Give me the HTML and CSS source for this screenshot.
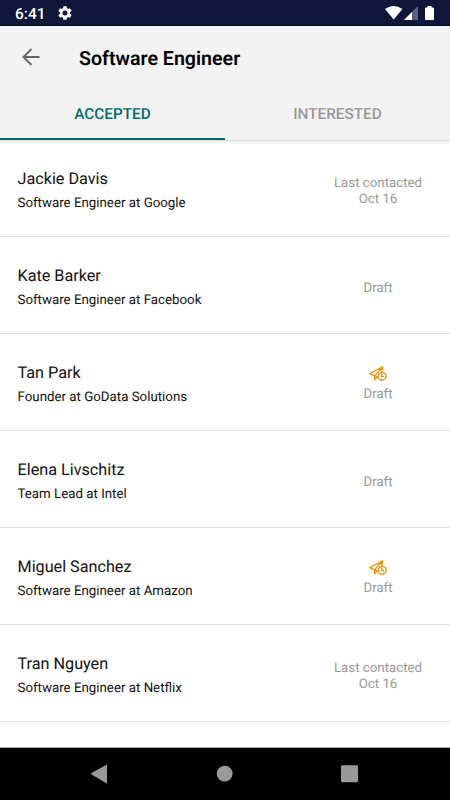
FILE: index.html
```html
<!DOCTYPE html>
<html lang="en">
<head>
    <meta charset="UTF-8">
    <meta name="viewport" content="width=device-width, initial-scale=1.0">
    <title>Software Engineer</title>
    <link rel="stylesheet" href="styles.css">
</head>
<body>
    <div class="status-bar">
        <span class="clock">6:41</span>
        <svg class="gear" viewBox="2 2 20 20" width="14" height="14"><path fill="#fff" d="M19.14 12.94c.04-.3.06-.61.06-.94s-.02-.64-.07-.94l2.03-1.58c.18-.14.23-.41.12-.61l-1.92-3.32c-.12-.22-.37-.29-.59-.22l-2.39.96c-.5-.38-1.03-.7-1.62-.94l-.36-2.54c-.04-.24-.24-.41-.48-.41h-3.84c-.24 0-.43.17-.47.41l-.36 2.54c-.59.24-1.13.57-1.62.94l-2.39-.96c-.22-.08-.47 0-.59.22L2.74 8.87c-.12.21-.08.47.12.61l2.03 1.58c-.05.3-.09.63-.09.94s.02.64.07.94l-2.03 1.58c-.18.14-.23.41-.12.61l1.92 3.32c.12.22.37.29.59.22l2.39-.96c.5.38 1.03.7 1.62.94l.36 2.54c.05.24.24.41.48.41h3.84c.24 0 .44-.17.47-.41l.36-2.54c.59-.24 1.13-.56 1.62-.94l2.39.96c.22.08.47 0 .59-.22l1.92-3.32c.12-.22.07-.47-.12-.61zM12 15.6a3.6 3.6 0 1 1 0-7.2 3.6 3.6 0 0 1 0 7.2z"/></svg>
        <div class="status-icons">
            <svg width="18" height="14" viewBox="0 0 18 14"><path fill="#fff" d="M0 3Q8.700-3 17.400 3L8.700 13.500z"/></svg>
            <svg width="14" height="14" viewBox="0 0 14 14"><path fill="#5d6080" d="M14 0v14H0z"/><path fill="#fff" d="M8 6v8H0z"/></svg>
            <svg class="battery" width="9" height="14" viewBox="0 0 9 15" preserveAspectRatio="none"><path fill="#fff" d="M2.500 0h4v1.500H8q1 0 1 1V14q0 1-1 1H1q-1 0-1-1V2.500q0-1 1-1h1.500z"/></svg>
        </div>
    </div>

    <header class="header">
        <div class="toolbar">
            <svg class="back" width="18" height="18" viewBox="0 0 18 18"><path fill="none" stroke="#666" stroke-width="1.900" d="M17.500 9H1.500M9.500 1L1.500 9l8 8"/></svg>
            <h1>Software Engineer</h1>
        </div>
        <nav class="tabs">
            <div class="tab active">ACCEPTED</div>
            <div class="tab">INTERESTED</div>
        </nav>
    </header>

    <main class="list" id="list">
        <!-- Candidate rows are added here -->
    </main>

    <footer class="nav-bar">
        <svg width="450" height="52" viewBox="0 0 450 52" fill="#999">
            <path d="M91.500 25L106 17q1-.5 1 .5v17q0 1-1 .5L91.500 26.500q-.8-.7 0-1.500z"/>
            <circle cx="224.700" cy="25.600" r="7.900"/>
            <rect x="341" y="17.200" width="17" height="17" rx="1.300"/>
        </svg>
    </footer>

    <script>
        const candidates = [
            { name: 'Jackie Davis', job: 'Software Engineer at Google', status: 'Last contacted<br>Oct 16' },
            { name: 'Kate Barker', job: 'Software Engineer at Facebook', status: 'Draft' },
            { name: 'Tan Park', job: 'Founder at GoData Solutions', status: 'Draft', scheduled: true },
            { name: 'Elena Livschitz', job: 'Team Lead at Intel', status: 'Draft' },
            { name: 'Miguel Sanchez', job: 'Software Engineer at Amazon', status: 'Draft', scheduled: true },
            { name: 'Tran Nguyen', job: 'Software Engineer at Netflix', status: 'Last contacted<br>Oct 16' }
        ];

        // Paper plane with a small clock, for scheduled drafts
        const planeIcon = `
            <svg class="plane" width="18" height="15" viewBox="0 0 18 15" fill="none" stroke="#e8930c" stroke-width="1.400" stroke-linejoin="round" stroke-linecap="round">
                <path d="M8.500 11.200L5.600 9.900V13.800L8 11.200M5.600 9.900L.8 7.500 13.800.8 12.800 5.500M5.600 9.900L13.800.8"/>
                <circle cx="13.200" cy="10.300" r="3.900"/>
                <path d="M12.800 8v2.600h2"/>
            </svg>`;

        document.getElementById('list').innerHTML = candidates.map(c => `
            <div class="row">
                <div class="person">
                    <h2>${c.name}</h2>
                    <p>${c.job}</p>
                </div>
                <div class="status${c.scheduled ? ' scheduled' : ''}">
                    ${c.scheduled ? planeIcon : ''}
                    <span>${c.status}</span>
                </div>
            </div>
        `).join('');
    </script>
</body>
</html>
```
FILE: styles.css
```css
* {
    margin: 0;
    padding: 0;
    box-sizing: border-box;
}

body {
    width: 450px;
    height: 800px;
    display: flex;
    flex-direction: column;
    overflow: hidden;
    background-color: #fff;
    color: #111;
    font-family: Roboto, sans-serif;
    text-rendering: geometricPrecision;
}

svg {
    display: block;
    flex: none;
}

.status-bar {
    height: 26px;
    flex: none;
    display: flex;
    align-items: center;
    padding: 1px 16px 0 15px;
    background-color: #10163a;
    border-bottom: 1px solid #050716;
    color: #fff;
}

.clock {
    width: 43px;
    font-size: 15.5px;
    font-weight: 500;
    line-height: 24px;
    padding-top: 2px;
}

.status-icons {
    display: flex;
    align-items: center;
    gap: 1px;
    margin-left: auto;
}

.battery {
    margin-left: 6px;
}

.header {
    height: 115px;
    flex: none;
    background-color: #f3f3f3;
    border-bottom: 1px solid #dcdcdc;
    box-shadow: 0 1px 3px rgba(0, 0, 0, 0.1);
}

.toolbar {
    height: 62px;
    display: flex;
    align-items: center;
    padding-left: 22px;
}

.toolbar h1 {
    margin-left: 39px;
    padding-top: 3px;
    font-size: 19.6px;
    font-weight: 600;
    line-height: 24px;
    color: #000;
}

.tabs {
    height: 52px;
    display: flex;
}

.tab {
    flex: 1;
    text-align: center;
    font-size: 15.3px;
    line-height: 53px;
    font-weight: 500;
    color: #999;
}

.tab.active {
    color: #00696b;
    border-bottom: 2px solid #00696b;
}

.list {
    flex: 1;
    overflow: hidden;
}

.row {
    height: 97px;
    display: flex;
    justify-content: space-between;
    padding: 0 17px 0 17.5px;
    border-bottom: 1px solid #dfdfdf;
}

.row:first-child {
    height: 96px;
}

.row:first-child .person {
    padding-top: 27px;
}

.person {
    padding-top: 28px;
}

.person h2 {
    font-size: 16.2px;
    font-weight: 400;
    line-height: 22px;
}

.person p {
    margin-top: 5px;
    font-size: 13.3px;
    font-weight: 400;
    line-height: 18px;
}

.status {
    width: 110px;
    display: flex;
    flex-direction: column;
    align-items: center;
    justify-content: center;
    padding-top: 7px;
    text-align: center;
    font-size: 13.3px;
    font-weight: 400;
    line-height: 16px;
    color: #999;
}

.status.scheduled {
    padding-top: 5px;
}

.plane {
    margin-top: -1px;
    margin-bottom: 6px;
}

.nav-bar {
    height: 53px;
    flex: none;
    background-color: #000;
    border-top: 1px solid #aaa;
}
```
